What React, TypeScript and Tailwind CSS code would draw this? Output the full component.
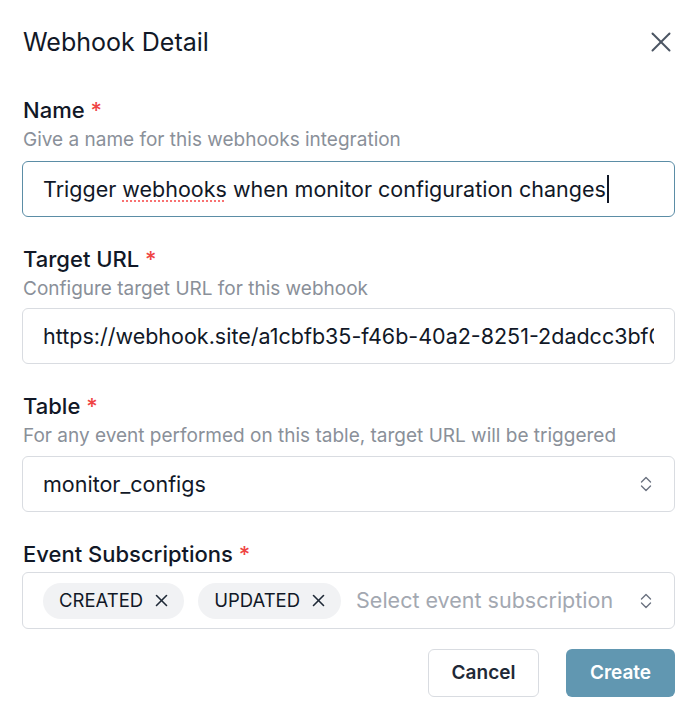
import { ReactNode } from 'react';

function Label({ children }: { children: ReactNode }) {
  return (
    <div className="h-7 text-[22px] leading-7 font-medium text-[#111827]">
      {children} <span className="text-[#ef4444]">*</span>
    </div>
  );
}

function Hint({ children }: { children: ReactNode }) {
  return <div className="mt-1 h-6 text-[19px] leading-6 text-[#8a9099]">{children}</div>;
}

function UpDown() {
  return (
    <svg width="12" height="16" viewBox="0 0 12 16" fill="none" stroke="#6b7280" strokeWidth="1.4" strokeLinecap="round" strokeLinejoin="round">
      <polyline points="1.5,6 6,1.5 10.5,6" />
      <polyline points="1.5,10 6,14.5 10.5,10" />
    </svg>
  );
}

function SmallX() {
  return (
    <svg width="13" height="13" viewBox="0 0 13 13" fill="none" stroke="#1f2937" strokeWidth="1.6" strokeLinecap="round">
      <line x1="1.5" y1="1.5" x2="11.5" y2="11.5" />
      <line x1="11.5" y1="1.5" x2="1.5" y2="11.5" />
    </svg>
  );
}

function Chip({ label }: { label: string }) {
  return (
    <span className="flex h-9 items-center gap-3 rounded-full bg-[#f1f2f4] px-4 text-[18.5px] text-[#111827]">
      {label}
      <SmallX />
    </span>
  );
}

export default function App() {
  return (
    <div className="min-h-screen bg-white pl-[22px] pr-[17px] pt-[26px] font-['Inter',sans-serif] text-[#111827] antialiased">
      <div className="flex h-8 items-center justify-between">
        <h1 className="pl-px text-[25px] leading-8 font-normal">Webhook Detail</h1>
        <button className="mr-[4px] flex h-5 w-5 items-center justify-center">
          <svg width="20" height="20" viewBox="0 0 20 20" fill="none" stroke="#4b5563" strokeWidth="2" strokeLinecap="round">
            <line x1="1.5" y1="1.5" x2="18.5" y2="18.5" />
            <line x1="18.5" y1="1.5" x2="1.5" y2="18.5" />
          </svg>
        </button>
      </div>

      <div className="mt-[38px] flex flex-col gap-7">
        <section>
          <div className="pl-px">
            <Label>Name</Label>
            <Hint>Give a name for this webhooks integration</Hint>
          </div>
          <div className="mt-[9px] flex h-14 items-center rounded-md border border-[#5b8da6] px-5 text-[21.5px]">
            <span>
              Trigger{' '}
              <span className="underline decoration-[#f87171] decoration-dotted decoration-2 underline-offset-4">webhooks</span>{' '}
              when monitor configuration changes
            </span>
            <span className="ml-px h-7 w-[2px] bg-[#111827]" />
          </div>
        </section>

        <section>
          <div className="pl-px">
            <Label>Target URL</Label>
            <Hint>Configure target URL for this webhook</Hint>
          </div>
          <div className="mt-[7px] flex h-14 items-center rounded-md border border-[#d9dce1] pl-5 pr-5 text-[21.5px]">
            <span className="overflow-hidden whitespace-nowrap">https://webhook.site/a1cbfb35-f46b-40a2-8251-2dadcc3bf09e</span>
          </div>
        </section>

        <section>
          <div className="pl-px">
            <Label>Table</Label>
            <Hint>For any event performed on this table, target URL will be triggered</Hint>
          </div>
          <div className="mt-2 flex h-14 items-center justify-between rounded-md border border-[#d9dce1] pl-5 pr-[22px] text-[21.5px]">
            <span>monitor_configs</span>
            <UpDown />
          </div>
        </section>

        <section>
          <div className="pl-px">
            <Label>Event Subscriptions</Label>
          </div>
          <div className="mt-1 flex h-[57px] items-center rounded-md border border-[#d9dce1] pl-5 pr-[22px]">
            <div className="flex flex-1 items-center gap-[14px]">
              <Chip label="CREATED" />
              <Chip label="UPDATED" />
              <span className="ml-px text-[21.5px] text-[#a3a8b1]">Select event subscription</span>
            </div>
            <UpDown />
          </div>
        </section>
      </div>

      <div className="mt-5 flex justify-end gap-[27px]">
        <button className="h-12 w-[111px] rounded-md border border-[#d9dce1] bg-white text-[19px] font-semibold text-[#1f2937]">
          Cancel
        </button>
        <button className="h-12 w-[109px] rounded-md bg-[#6197b1] text-[19px] font-semibold text-white">
          Create
        </button>
      </div>
    </div>
  );
}
